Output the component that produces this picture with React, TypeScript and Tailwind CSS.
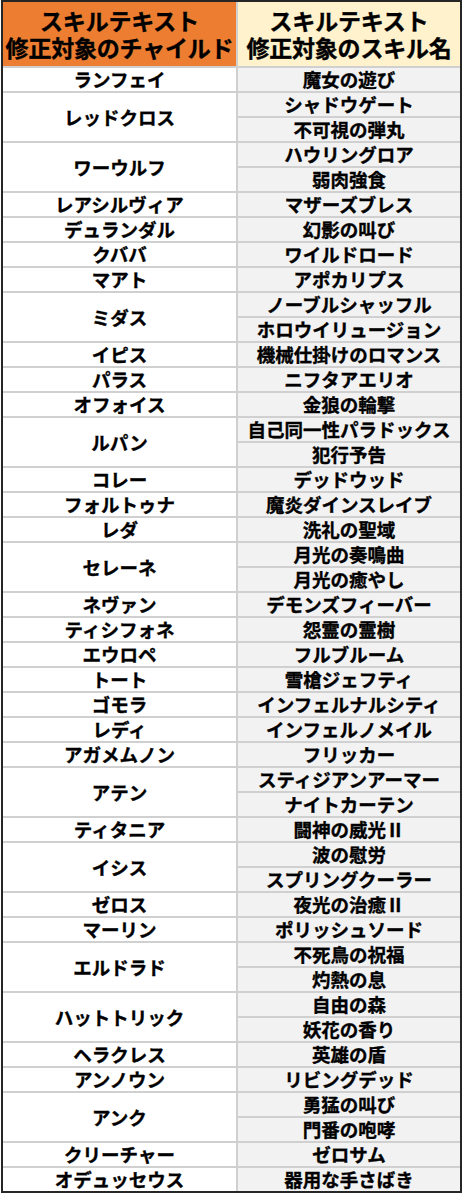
import React from "react";

const groups: [string, string[]][] = [
  ["ランフェイ", ["魔女の遊び"]],
  ["レッドクロス", ["シャドウゲート", "不可視の弾丸"]],
  ["ワーウルフ", ["ハウリングロア", "弱肉強食"]],
  ["レアシルヴィア", ["マザーズブレス"]],
  ["デュランダル", ["幻影の叫び"]],
  ["クババ", ["ワイルドロード"]],
  ["マアト", ["アポカリプス"]],
  ["ミダス", ["ノーブルシャッフル", "ホロウイリュージョン"]],
  ["イピス", ["機械仕掛けのロマンス"]],
  ["パラス", ["ニフタアエリオ"]],
  ["オフォイス", ["金狼の輪撃"]],
  ["ルパン", ["自己同一性パラドックス", "犯行予告"]],
  ["コレー", ["デッドウッド"]],
  ["フォルトゥナ", ["魔炎ダインスレイブ"]],
  ["レダ", ["洗礼の聖域"]],
  ["セレーネ", ["月光の奏鳴曲", "月光の癒やし"]],
  ["ネヴァン", ["デモンズフィーバー"]],
  ["ティシフォネ", ["怨霊の霊樹"]],
  ["エウロペ", ["フルブルーム"]],
  ["トート", ["雪槍ジェフティ"]],
  ["ゴモラ", ["インフェルナルシティ"]],
  ["レディ", ["インフェルノメイル"]],
  ["アガメムノン", ["フリッカー"]],
  ["アテン", ["スティジアンアーマー", "ナイトカーテン"]],
  ["ティタニア", ["闘神の威光Ⅱ"]],
  ["イシス", ["波の慰労", "スプリングクーラー"]],
  ["ゼロス", ["夜光の治癒Ⅱ"]],
  ["マーリン", ["ポリッシュソード"]],
  ["エルドラド", ["不死鳥の祝福", "灼熱の息"]],
  ["ハットトリック", ["自由の森", "妖花の香り"]],
  ["ヘラクレス", ["英雄の盾"]],
  ["アンノウン", ["リビングデッド"]],
  ["アンク", ["勇猛の叫び", "門番の咆哮"]],
  ["クリーチャー", ["ゼロサム"]],
  ["オデュッセウス", ["器用な手さばき"]],
];

export default function App() {
  const font = {
    fontFamily: '"Noto Sans CJK JP", "Noto Sans", sans-serif',
  };
  return (
    <div className="bg-white w-[463px] h-[1200px]" style={font}>
      <div className="ml-[1px] w-[461px] border-2 border-[#262626] flex flex-col text-black font-bold [-webkit-text-stroke:0.35px_black]">
        <div className="flex h-[64px] overflow-hidden">
          <div className="w-[235px] shrink-0 bg-[#ed7d31] border-r-2 border-[#d0d0d0] flex flex-col items-center justify-center text-[23px] leading-[27px] tracking-[-0.2px]">
            <span>スキルテキスト</span>
            <span>修正対象のチャイルド</span>
          </div>
          <div className="flex-1 bg-[#fff2cc] flex flex-col items-center justify-center text-[23px] leading-[27px] tracking-[-0.2px]">
            <span>スキルテキスト</span>
            <span>修正対象のスキル名</span>
          </div>
        </div>
        {groups.map(([name, skills]) => (
          <div key={name} className="flex">
            <div className="w-[235px] shrink-0 bg-white border-r-2 border-t-2 border-[#d0d0d0] flex items-center justify-center text-[18.5px] leading-none">
              {name}
            </div>
            <div className="flex-1 flex flex-col">
              {skills.map((s) => (
                <div
                  key={s}
                  className="h-[25px] bg-[#f2f2f2] border-t-2 border-[#d0d0d0] flex items-center justify-center text-[18.5px] leading-none"
                >
                  {s}
                </div>
              ))}
            </div>
          </div>
        ))}
      </div>
    </div>
  );
}
